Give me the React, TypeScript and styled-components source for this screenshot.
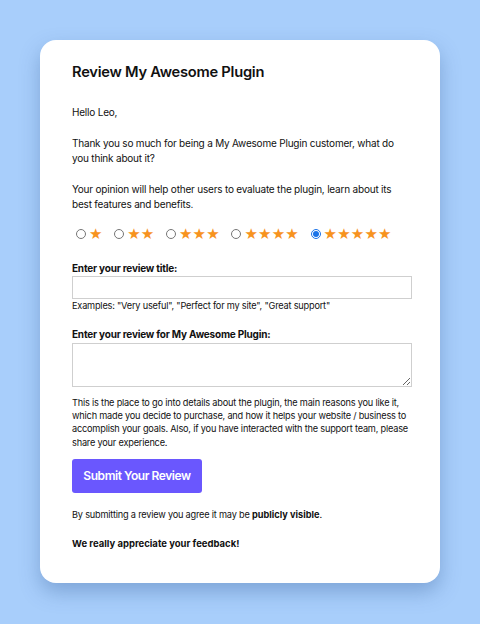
import React from "react";
import styled, { createGlobalStyle } from "styled-components";

const Global = createGlobalStyle`
  html, body { margin: 0; padding: 0; }
  body {
    background: #a8cefb;
    font-family: Inter, "Noto Sans", "Liberation Sans", sans-serif;
    color: #111;
  }
`;

const Page = styled.div`
  padding: 40px;
  min-height: 624px;
  box-sizing: border-box;
`;

const Card = styled.div`
  width: 400px;
  box-sizing: border-box;
  background: #fff;
  border-radius: 16px;
  padding: 22px 28px 32px 32px;
  box-shadow: 0 9px 20px rgba(50, 90, 150, 0.35);
`;

const Title = styled.h1`
  margin: 0 0 23px;
  font-size: 14.7px;
  letter-spacing: -0.25px;
  line-height: 20px;
  font-weight: 600;
  color: #111;
`;

const Para = styled.p`
  margin: 0 0 15px;
  font-size: 10px;
  letter-spacing: -0.2px;
  line-height: 15.5px;
`;

const Ratings = styled.div`
  display: flex;
  align-items: center;
  gap: 11.5px;
  margin: -2px 0 19px 4px;
  height: 16px;
`;

const RatingLabel = styled.label`
  display: flex;
  align-items: center;
  gap: 3px;
`;

const Radio = styled.input`
  width: 10px;
  height: 10px;
  margin: 0;
  accent-color: #1a73e8;
`;

const Stars = styled.span`
  font-family: "DejaVu Sans", sans-serif;
  font-size: 15px;
  letter-spacing: 0.2px;
  color: #f7931e;
  line-height: 16px;
`;

const FieldLabel = styled.div`
  font-size: 10px;
  letter-spacing: -0.2px;
  font-weight: 700;
  line-height: 15px;
  color: #111;
`;

const TextInput = styled.input`
  display: block;
  width: 340px;
  height: 23px;
  box-sizing: border-box;
  margin: 0;
  border: 1px solid #cfcfcf;
  border-radius: 0;
  padding: 2px 4px;
`;

const TextArea = styled.textarea`
  display: block;
  width: 340px;
  height: 44px;
  box-sizing: border-box;
  margin: 1px 0 9px;
  border: 1px solid #cfcfcf;
  border-radius: 0;
  padding: 2px 4px;
`;

const Hint = styled.div<{ $mb: number }>`
  font-size: 9.2px;
  letter-spacing: -0.2px;
  line-height: 13.3px;
  margin-bottom: ${(p) => p.$mb}px;
`;

const Button = styled.button`
  display: block;
  width: 130px;
  height: 34px;
  margin: 10px 0 15px;
  border: none;
  border-radius: 3px;
  background: #6a57fe;
  color: #fff;
  font-family: Inter, "Noto Sans", sans-serif;
  font-size: 12px;
  letter-spacing: -0.45px;
  font-weight: 600;
`;

const Small = styled.p<{ $bold?: boolean }>`
  margin: 0 0 15px;
  font-size: ${(p) => (p.$bold ? "9.5px" : "9.2px")};
  letter-spacing: ${(p) => (p.$bold ? "0" : "-0.2px")};
  line-height: 14px;
  font-weight: ${(p) => (p.$bold ? 700 : 400)};
  &:last-child { margin-bottom: 0; }
  b { font-weight: 700; letter-spacing: 0; }
`;

const ratings = [1, 2, 3, 4, 5];

export default function App() {
  return (
    <>
      <Global />
      <Page>
        <Card>
          <Title>Review My Awesome Plugin</Title>
          <Para>Hello Leo,</Para>
          <Para>
            Thank you so much for being a My Awesome Plugin customer, what do
            you think about it?
          </Para>
          <Para>
            Your opinion will help other users to evaluate the plugin, learn
            about its best features and benefits.
          </Para>
          <Ratings>
            {ratings.map((n) => (
              <RatingLabel key={n}>
                <Radio type="radio" name="rating" defaultChecked={n === 5} />
                <Stars>{"★".repeat(n)}</Stars>
              </RatingLabel>
            ))}
          </Ratings>
          <FieldLabel>Enter your review title:</FieldLabel>
          <TextInput type="text" />
          <Hint $mb={15}>
            Examples: "Very useful", "Perfect for my site", "Great support"
          </Hint>
          <FieldLabel>Enter your review for My Awesome Plugin:</FieldLabel>
          <TextArea />
          <Hint $mb={0}>
            This is the place to go into details about the plugin, the main
            reasons you like it, which made you decide to purchase, and how it
            helps your website / business to accomplish your goals. Also, if
            you have interacted with the support team, please share your
            experience.
          </Hint>
          <Button>Submit Your Review</Button>
          <Small>
            By submitting a review you agree it may be <b>publicly visible</b>.
          </Small>
          <Small $bold>We really appreciate your feedback!</Small>
        </Card>
      </Page>
    </>
  );
}
